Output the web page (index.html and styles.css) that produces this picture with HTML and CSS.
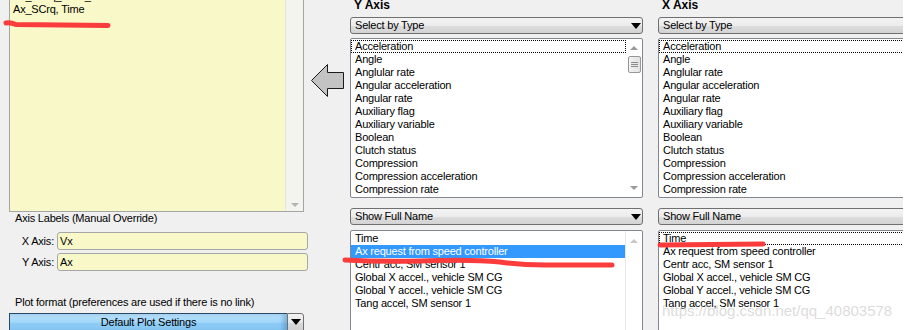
FILE: index.html
```html
<!DOCTYPE html>
<html lang="en">
<head>
  <meta charset="UTF-8" />
  <title>Plot Setup - Axis Selection</title>
  <link rel="stylesheet" href="styles.css">
</head>
<body>
  <div class="screen">

    <!-- left side: variable summary, axis label overrides, plot format -->
    <div class="col-left">
      <div class="notes">
        <div class="notes-text">
          <div class="cut-line">Vx_SCrq_Time_</div>
          <div>Ax_SCrq, Time</div>
        </div>
        <div class="notes-scroll"><span class="sb-down"></span></div>
      </div>

      <div class="group-label">Axis Labels (Manual Override)</div>
      <div class="field-row">
        <label>X Axis:</label>
        <div class="field">Vx</div>
      </div>
      <div class="field-row">
        <label>Y Axis:</label>
        <div class="field">Ax</div>
      </div>

      <div class="group-label plot-label">Plot format (preferences are used if there is no link)</div>
      <div class="plot-row">
        <div class="plot-btn">Default Plot Settings</div>
        <div class="plot-drop"><span class="tri"></span></div>
      </div>
    </div>

    <div class="col-arrow">
      <svg width="40" height="110" viewBox="0 0 40 110">
        <polygon points="1.5,80.5 17.5,64.5 17.5,72.5 33.5,72.5 33.5,88.5 17.5,88.5 17.5,96.5" fill="#c3c3c3" stroke="#1a1a1a" stroke-width="1" />
      </svg>
    </div>

    <!-- Y axis -->
    <div class="col-axis">
      <div class="axis-title">Y Axis</div>
      <div class="select">Select by Type<span class="tri"></span></div>
      <div class="listbox types">
        <div class="items">
          <div class="row focus">Acceleration</div>
          <div class="row">Angle</div>
          <div class="row">Anglular rate</div>
          <div class="row">Angular acceleration</div>
          <div class="row">Angular rate</div>
          <div class="row">Auxiliary flag</div>
          <div class="row">Auxiliary variable</div>
          <div class="row">Boolean</div>
          <div class="row">Clutch status</div>
          <div class="row">Compression</div>
          <div class="row">Compression acceleration</div>
          <div class="row">Compression rate</div>
        </div>
        <div class="lb-scroll">
          <span class="sb-up"></span>
          <span class="thumb"><i></i><i></i><i></i></span>
          <span class="sb-down"></span>
        </div>
      </div>
      <div class="select second">Show Full Name<span class="tri"></span></div>
      <div class="listbox names">
        <div class="items">
          <div class="row">Time</div>
          <div class="row selected">Ax request from speed controller</div>
          <div class="row">Centr acc, SM sensor 1</div>
          <div class="row">Global X accel., vehicle SM CG</div>
          <div class="row">Global Y accel., vehicle SM CG</div>
          <div class="row">Tang accel, SM sensor 1</div>
        </div>
        <div class="lb-scroll disabled">
          <span class="sb-up"></span>
        </div>
      </div>
    </div>

    <!-- X axis -->
    <div class="col-axis">
      <div class="axis-title">X Axis</div>
      <div class="select">Select by Type<span class="tri"></span></div>
      <div class="listbox types">
        <div class="items">
          <div class="row focus">Acceleration</div>
          <div class="row">Angle</div>
          <div class="row">Anglular rate</div>
          <div class="row">Angular acceleration</div>
          <div class="row">Angular rate</div>
          <div class="row">Auxiliary flag</div>
          <div class="row">Auxiliary variable</div>
          <div class="row">Boolean</div>
          <div class="row">Clutch status</div>
          <div class="row">Compression</div>
          <div class="row">Compression acceleration</div>
          <div class="row">Compression rate</div>
        </div>
      </div>
      <div class="select second">Show Full Name<span class="tri"></span></div>
      <div class="listbox names">
        <div class="items">
          <div class="row focus">Time</div>
          <div class="row">Ax request from speed controller</div>
          <div class="row">Centr acc, SM sensor 1</div>
          <div class="row">Global X accel., vehicle SM CG</div>
          <div class="row">Global Y accel., vehicle SM CG</div>
          <div class="row">Tang accel, SM sensor 1</div>
        </div>
      </div>
    </div>

    <!-- red pen marks drawn over the screenshot -->
    <svg class="marks" width="903" height="330" viewBox="0 0 903 330">
      <path d="M6,23 Q10,22 16,24.5 L108,25.5" />
      <path d="M345,260 Q380,262 420,261 Q470,259 500,262 Q520,265 545,265 L612,265" />
      <path d="M660,245 L763,244" />
    </svg>
    <div class="watermark">https://blog.csdn.net/qq_40803578</div>
  </div>
</body>
</html>
```

FILE: styles.css
```css
body {
  margin: 0;
  padding: 0;
  background-color: #fff;
  font-family: "Liberation Sans", Arial, sans-serif;
  font-size: 11px;
  letter-spacing: -0.2px;
  color: #000;
}

.screen {
  position: relative;
  width: 903px;
  height: 330px;
  background-color: #f0f0f0;
  display: flex;
  overflow: hidden;
}

/* ---------- left column ---------- */

.col-left {
  width: 301px;
  padding-left: 9px;
  flex-shrink: 0;
}

.notes {
  width: 295px;
  height: 212px;
  box-sizing: border-box;
  border: 1px solid #a5a5a5;
  border-top: none;
  display: flex;
  overflow: hidden;
}

.notes-text {
  flex: 1;
  background-color: #f8f8c9;
  padding-left: 3px;
  line-height: 13px;
}

.cut-line {
  margin-top: -10px;
}

.notes-scroll {
  width: 17px;
  background-color: #f4f4ef;
  border-left: 1px solid #e6e6dc;
  display: flex;
  flex-direction: column;
  justify-content: flex-end;
  align-items: center;
  padding-bottom: 4px;
}

.group-label {
  line-height: 13px;
  padding-left: 6px;
}

.field-row {
  display: flex;
  align-items: center;
  gap: 3px;
  margin-top: 3px;
}

.group-label + .field-row {
  margin-top: 7px;
}

.field-row label {
  width: 45px;
  text-align: right;
}

.field {
  width: 251px;
  height: 18px;
  box-sizing: border-box;
  background-color: #f8f8c9;
  border: 1px solid #a6a6a6;
  border-radius: 3px;
  padding-left: 2px;
  line-height: 16px;
}

.plot-label {
  margin-top: 25px;
}

.plot-row {
  display: flex;
  margin-top: 4px;
  width: 295px;
}

.plot-btn {
  flex: 1;
  height: 20px;
  box-sizing: border-box;
  border: 1px solid #2a4b66;
  border-right: none;
  background: linear-gradient(to bottom, #bde4fc, #9fd5fa 50%, #8ccbf6 51%, #86c6f2);
  box-shadow: inset -4px 0 4px rgba(40, 110, 170, 0.35);
  text-align: center;
  line-height: 16px;
}

.plot-drop {
  width: 17px;
  height: 20px;
  box-sizing: border-box;
  border: 1px solid #707070;
  border-radius: 0 3px 0 0;
  background: linear-gradient(to bottom, #f2f2f2, #e6e6e6 50%, #d8d8d8 51%, #cfcfcf);
  display: flex;
  justify-content: center;
  padding-top: 5px;
}

/* ---------- arrow ---------- */

.col-arrow {
  width: 40px;
  flex-shrink: 0;
}

.col-arrow svg {
  display: block;
}

/* ---------- axis columns ---------- */

.col-axis {
  width: 293px;
  flex-shrink: 0;
  margin-right: 15px;
}

.axis-title {
  font-weight: bold;
  font-size: 12px;
  letter-spacing: 0;
  line-height: 14px;
  margin-top: -2px;
  padding-left: 4px;
}

.select {
  position: relative;
  height: 17px;
  box-sizing: border-box;
  margin-top: 5px;
  border: 1px solid #707070;
  border-radius: 3px;
  background: linear-gradient(to bottom, #f3f3f3, #ececec 50%, #dedede 51%, #d3d3d3);
  line-height: 15px;
  padding-left: 4px;
}

.select.second {
  margin-top: 10px;
}

.select .tri {
  position: absolute;
  right: 1px;
  top: 5px;
}

.tri {
  display: block;
  width: 0;
  height: 0;
  border-left: 5px solid transparent;
  border-right: 5px solid transparent;
  border-top: 6px solid #000;
}

.listbox {
  margin-top: 4px;
  height: 160px;
  box-sizing: border-box;
  border: 1px solid #828790;
  border-radius: 2px;
  background-color: #fff;
  display: flex;
  overflow: hidden;
}

.listbox.names {
  margin-top: 5px;
  height: 120px;
}

.items {
  flex: 1;
  padding-top: 1px;
}

.row {
  height: 13px;
  line-height: 11px;
  box-sizing: border-box;
  border: 1px solid transparent;
  padding-left: 3px;
  white-space: nowrap;
}

.row.focus {
  border: 1px dotted #000;
}

.row.selected {
  background-color: #3399ff;
  color: #fff;
}

.lb-scroll {
  width: 16px;
  display: flex;
  flex-direction: column;
  align-items: center;
  padding: 7px 0 7px;
}

.lb-scroll .thumb {
  margin-top: 6px;
  width: 13px;
  height: 17px;
  box-sizing: border-box;
  border: 1px solid #979797;
  border-radius: 2px;
  background: linear-gradient(to right, #f3f3f3, #e2e2e2);
  display: flex;
  flex-direction: column;
  align-items: center;
  justify-content: center;
  gap: 1px;
}

.lb-scroll .thumb i {
  width: 7px;
  height: 1px;
  background-color: #8a8a8a;
}

.lb-scroll .sb-down {
  margin-top: auto;
}

.lb-scroll.disabled {
  border-left: 1px solid #e8e8e8;
  padding-top: 8px;
}

.sb-up,
.sb-down {
  display: block;
  width: 0;
  height: 0;
  border-left: 4px solid transparent;
  border-right: 4px solid transparent;
}

.sb-up {
  border-bottom: 4px solid #9a9a9a;
}

.sb-down {
  border-top: 4px solid #9a9a9a;
}

.lb-scroll.disabled .sb-up {
  border-bottom-color: #c8c8c8;
}

.notes-scroll .sb-down {
  border-top-color: #b4b4b4;
}

/* ---------- overlays ---------- */

.marks {
  position: absolute;
  left: 0;
  top: 0;
  pointer-events: none;
}

.marks path {
  fill: none;
  stroke: #fa3c3c;
  stroke-width: 5;
  stroke-linecap: round;
}

.watermark {
  position: absolute;
  left: 662px;
  top: 302px;
  font-size: 15px;
  letter-spacing: 0;
  color: rgba(190, 190, 190, 0.55);
  white-space: nowrap;
}
```
